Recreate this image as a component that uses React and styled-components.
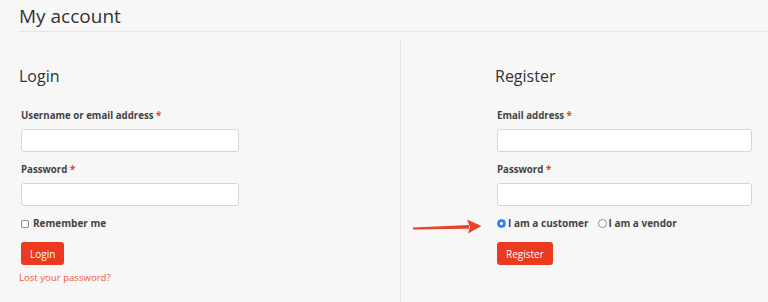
import React from "react";
import styled, { createGlobalStyle } from "styled-components";

const GlobalStyle = createGlobalStyle`
  body {
    margin: 0;
    background: #f7f7f7;
    font-family: "Open Sans", "DejaVu Sans", sans-serif;
    color: #333;
  }
`;

const Page = styled.div`
  padding-left: 19px;
  height: 302px;
  overflow: hidden;
`;

const Title = styled.h1`
  margin: 0;
  padding-top: 2px;
  font-size: 19px;
  line-height: 29px;
  font-weight: 400;
  color: #333;
  border-bottom: 1px solid #e6e6e6;
`;

const Columns = styled.div`
  display: grid;
  grid-template-columns: 381px 1fr;
  margin-top: 8px;
`;

const Column = styled.section`
  position: relative;
  padding-left: ${({ $divided }) => ($divided ? "94px" : "0")};
  padding-right: ${({ $divided }) => ($divided ? "16px" : "0")};
  border-left: ${({ $divided }) => ($divided ? "1px solid #e6e6e6" : "none")};
  height: 270px;
`;

const Heading = styled.h2`
  margin: 24px 0 21px;
  font-size: 16px;
  line-height: 24px;
  font-weight: 400;
  color: #333;
`;

const Form = styled.form`
  display: flex;
  flex-direction: column;
  align-items: flex-start;
  padding-left: 2px;
  width: ${({ $width }) => $width || "auto"};
`;

const Field = styled.div`
  width: 100%;
  margin-bottom: 10px;

  & + & label {
    margin-top: 1px;
  }
`;

const Label = styled.label`
  display: block;
  font-size: 9.7px;
  line-height: 14px;
  font-weight: 700;
  color: #444;
  margin-bottom: 6px;
`;

const Required = styled.span`
  color: #e3401e;
`;

const Input = styled.input`
  display: block;
  box-sizing: border-box;
  width: 100%;
  height: 23px;
  margin: 0;
  background: #fff;
  border: 1px solid #d6d6d6;
  border-radius: 3px;
`;

const OptionRow = styled.div`
  position: relative;
  display: flex;
  align-items: center;
  height: 14px;
  gap: 9px;
`;

const Option = styled.label`
  display: flex;
  align-items: center;
  gap: 2px;
  font-size: 10px;
  line-height: 14px;
  font-weight: 700;
  color: #444;
`;

const Checkbox = styled.input.attrs({ type: "checkbox" })`
  appearance: none;
  box-sizing: border-box;
  width: 8px;
  height: 8px;
  margin: 1px 2px 0 0;
  background: #fff;
  border: 1px solid #8d8d8d;
  border-radius: 2px;
`;

const Radio = styled.input.attrs({ type: "radio" })`
  appearance: none;
  box-sizing: border-box;
  width: 9px;
  height: 9px;
  margin: 1px 0 0;
  border-radius: 50%;
  background: #fff;
  border: 1px solid #8d8d8d;

  &:checked {
    border-color: #2a7de1;
    background: radial-gradient(circle, #fff 0 1.3px, #2f82ea 1.6px);
  }
`;

const Button = styled.button`
  margin-top: 12px;
  height: 23px;
  padding: 0 9px;
  border: none;
  border-radius: 3px;
  background: #ec3a20;
  color: #fff;
  font-family: inherit;
  font-size: 10px;
  font-weight: 500;
`;

const LostLink = styled.a`
  margin: 6px 0 0 -2px;
  font-size: 9.6px;
  line-height: 14px;
  color: #f05a3e;
  text-decoration: none;
`;

const Pointer = styled.svg`
  position: absolute;
  right: calc(100% + 15px);
  top: 2px;
`;

const Arrow = () => (
  <Pointer width="70" height="17" viewBox="0 0 70 17">
    <polygon points="1,9.6 57,7.1 57,10.7 1,11.6" fill="#e8442c" />
    <polygon points="69.5,8 55,1.5 58,8.9 56,15.5" fill="#e8442c" />
  </Pointer>
);

export default function App() {
  return (
    <>
      <GlobalStyle />
      <Page>
        <Title>My account</Title>
        <Columns>
          <Column>
            <Heading>Login</Heading>
            <Form $width="218px">
              <Field>
                <Label>
                  Username or email address <Required>*</Required>
                </Label>
                <Input type="text" />
              </Field>
              <Field>
                <Label>
                  Password <Required>*</Required>
                </Label>
                <Input type="password" />
              </Field>
              <OptionRow>
                <Option>
                  <Checkbox />
                  Remember me
                </Option>
              </OptionRow>
              <Button type="button">Login</Button>
              <LostLink href="#">Lost your password?</LostLink>
            </Form>
          </Column>
          <Column $divided>
            <Heading>Register</Heading>
            <Form>
              <Field>
                <Label>
                  Email address <Required>*</Required>
                </Label>
                <Input type="email" />
              </Field>
              <Field>
                <Label>
                  Password <Required>*</Required>
                </Label>
                <Input type="password" />
              </Field>
              <OptionRow>
                <Arrow />
                <Option>
                  <Radio name="role" defaultChecked />
                  I am a customer
                </Option>
                <Option>
                  <Radio name="role" />
                  I am a vendor
                </Option>
              </OptionRow>
              <Button type="button">Register</Button>
            </Form>
          </Column>
        </Columns>
      </Page>
    </>
  );
}
